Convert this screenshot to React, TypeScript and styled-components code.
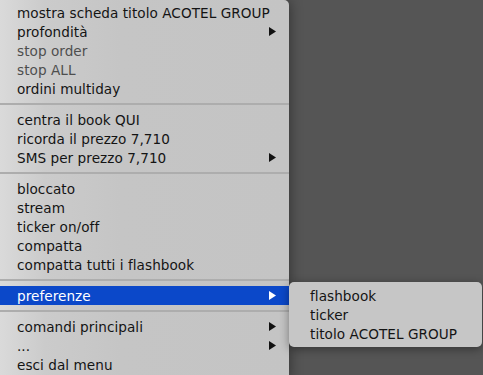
import React from "react";
import styled, { createGlobalStyle } from "styled-components";

const GlobalStyle = createGlobalStyle`
  html, body {
    margin: 0;
    padding: 0;
    background: #555555;
    overflow: hidden;
  }
  body {
    font-family: "DejaVu Sans", "Liberation Sans", sans-serif;
  }
`;

const Screen = styled.div`
  width: 483px;
  height: 375px;
  display: flex;
  align-items: flex-start;
  background: #555555;
  overflow: hidden;
`;

const Menu = styled.ul`
  list-style: none;
  margin: 0;
  padding: 3px 0 0;
  width: 289px;
  min-height: 380px;
  box-sizing: border-box;
  background: linear-gradient(to right, #dadada 0, #cbcbcb 45px, #c5c5c5 120px, #c4c4c4 100%);
  border-top-right-radius: 5px;
  box-shadow: 0 0 14px rgba(0, 0, 0, 0.45);
  position: relative;
  z-index: 1;
`;

const Item = styled.li<{ $disabled?: boolean; $active?: boolean }>`
  position: relative;
  display: flex;
  align-items: center;
  justify-content: space-between;
  height: 19px;
  padding: 0 13px 0 17px;
  font-size: 13.6px;
  letter-spacing: 0.05px;
  color: ${(p) => (p.$active ? "#ffffff" : p.$disabled ? "#4e4e4e" : "#141414")};
  background: ${(p) => (p.$active ? "#0b48c9" : "transparent")};
  white-space: nowrap;
`;

const Separator = styled.li`
  height: 12px;
  display: flex;
  align-items: center;

  &::before {
    content: "";
    flex: 1;
    height: 2px;
    background: #adadad;
  }
`;

const Arrow = styled.svg`
  width: 7px;
  height: 9px;
  flex: none;
`;

const Submenu = styled.ul`
  list-style: none;
  margin: 0;
  padding: 4px 0;
  position: absolute;
  left: 100%;
  top: -4px;
  width: 193px;
  box-sizing: border-box;
  background: #c6c6c6;
  border-radius: 5px;
  box-shadow: 0 2px 10px rgba(0, 0, 0, 0.4);
`;

const SubItem = styled.li`
  height: 19px;
  display: flex;
  align-items: center;
  padding-left: 21px;
  font-size: 13.6px;
  letter-spacing: 0.05px;
  color: #141414;
  white-space: nowrap;
`;

type Entry =
  | { sep: true }
  | { label: string; disabled?: boolean; sub?: boolean; active?: boolean };

const entries: Entry[] = [
  { label: "mostra scheda titolo ACOTEL GROUP" },
  { label: "profondità", sub: true },
  { label: "stop order", disabled: true },
  { label: "stop ALL", disabled: true },
  { label: "ordini multiday" },
  { sep: true },
  { label: "centra il book QUI" },
  { label: "ricorda il prezzo 7,710" },
  { label: "SMS per prezzo 7,710", sub: true },
  { sep: true },
  { label: "bloccato" },
  { label: "stream" },
  { label: "ticker on/off" },
  { label: "compatta" },
  { label: "compatta tutti i flashbook" },
  { sep: true },
  { label: "preferenze", sub: true, active: true },
  { sep: true },
  { label: "comandi principali", sub: true },
  { label: "...", sub: true },
  { label: "esci dal menu" },
];

const preferences = ["flashbook", "ticker", "titolo ACOTEL GROUP"];

const SubArrow = ({ color }: { color: string }) => (
  <Arrow viewBox="0 0 7 9">
    <polygon points="0,0 7,4.5 0,9" fill={color} />
  </Arrow>
);

export default function App() {
  return (
    <Screen>
      <GlobalStyle />
      <Menu>
        {entries.map((e, i) =>
          "sep" in e ? (
            <Separator key={i} />
          ) : (
            <Item key={i} $disabled={e.disabled} $active={e.active}>
              <span>{e.label}</span>
              {e.sub && <SubArrow color={e.active ? "#ffffff" : "#111111"} />}
              {e.active && (
                <Submenu>
                  {preferences.map((p) => (
                    <SubItem key={p}>{p}</SubItem>
                  ))}
                </Submenu>
              )}
            </Item>
          )
        )}
      </Menu>
    </Screen>
  );
}
